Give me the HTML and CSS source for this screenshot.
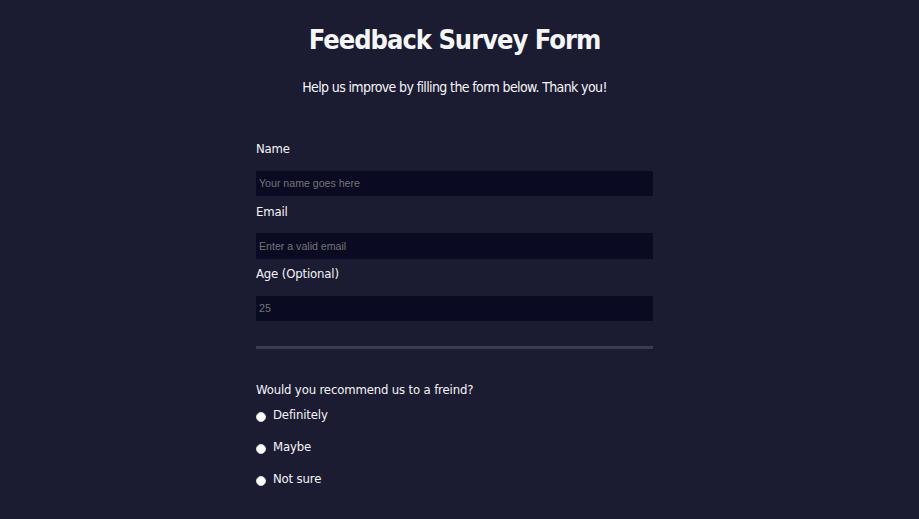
FILE: index.html
```html
<!DOCTYPE html>
<html lang="en">
<head>
<meta charset="utf-8">
<title>Feedback Survey Form</title>
<link rel="stylesheet" href="styles.css">
</head>
<body>
<main class="page">
  <h1 class="title">Feedback Survey Form</h1>
  <p class="intro">Help us improve by filling the form below. Thank you!</p>
  <form class="survey">
    <fieldset class="group group-details">
      <label class="field-label" for="name">Name</label>
      <input class="text-input" id="name" type="text" placeholder="Your name goes here">
      <label class="field-label" for="email">Email</label>
      <input class="text-input" id="email" type="email" placeholder="Enter a valid email">
      <label class="field-label" for="age">Age (Optional)</label>
      <input class="text-input" id="age" type="number" placeholder="25">
    </fieldset>
    <fieldset class="group group-choice">
      <p class="question">Would you recommend us to a freind?</p>
      <label class="radio-row"><input class="radio-dot" type="radio" name="rec" value="definitely"><span>Definitely</span></label>
      <label class="radio-row"><input class="radio-dot" type="radio" name="rec" value="maybe"><span>Maybe</span></label>
      <label class="radio-row"><input class="radio-dot" type="radio" name="rec" value="notsure"><span>Not sure</span></label>
    </fieldset>
  </form>
</main>
</body>
</html>
```
FILE: styles.css
```css
html, body {
  margin: 0;
  height: 100%;
}
body {
  background: #1b1b32;
  color: #f5f6f7;
  font-family: "DejaVu Sans Condensed", "DejaVu Sans", sans-serif;
  padding-right: 10px;
  overflow: hidden;
}
.page {
  width: 397px;
  margin: 0 auto;
}
.title {
  margin: 23px -100px 0;
  font-size: 27px;
  line-height: 34px;
  letter-spacing: -1px;
  font-weight: bold;
  text-align: center;
}
.intro {
  margin: 22px -100px 0;
  font-size: 14px;
  line-height: 17px;
  letter-spacing: -0.62px;
  text-align: center;
}
.survey {
  margin-top: 45px;
}
.group {
  border: none;
  margin: 0;
  padding: 0;
  min-width: 0;
}
.group-details {
  display: flex;
  flex-direction: column;
  padding-bottom: 25px;
  border-bottom: 3px solid #3b3b4f;
}
.field-label {
  display: block;
  font-size: 13px;
  line-height: 16px;
  letter-spacing: -0.15px;
}
.text-input {
  box-sizing: border-box;
  width: 100%;
  height: 25.5px;
  margin: 13.5px 0 7.5px;
  padding: 0 2px;
  border: 1px solid #0a0a23;
  background: #0a0a23;
  color: #ffffff;
  font-family: "Liberation Sans", Arial, sans-serif;
  font-size: 10.6px;
  outline: none;
}
.text-input:last-child {
  margin-bottom: 0;
}
.text-input::placeholder {
  color: #757575;
}
.text-input::-webkit-outer-spin-button,
.text-input::-webkit-inner-spin-button {
  -webkit-appearance: none;
  margin: 0;
}
.group-choice {
  padding-top: 33px;
  display: flex;
  flex-direction: column;
  gap: 16px;
}
.question {
  margin: 0 0 -7px;
  font-size: 13px;
  line-height: 16px;
  letter-spacing: -0.15px;
}
.radio-row {
  display: flex;
  align-items: center;
  gap: 7px;
  font-size: 13px;
  line-height: 16px;
  letter-spacing: -0.15px;
}
.radio-dot {
  -webkit-appearance: none;
  appearance: none;
  width: 10px;
  height: 10px;
  margin: 3px 0 0 0;
  border-radius: 50%;
  background: #ffffff;
  border: 1px solid #d8d8d8;
  box-sizing: border-box;
}
```
